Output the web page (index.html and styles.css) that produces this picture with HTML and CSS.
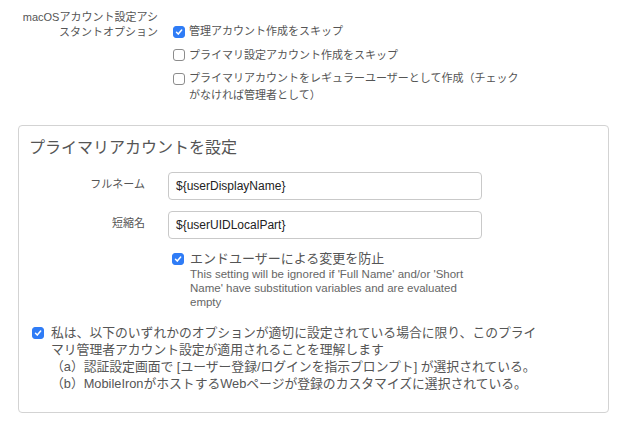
FILE: index.html
```html
<!DOCTYPE html>
<html lang="ja">
<head>
<meta charset="utf-8">
<link rel="stylesheet" href="styles.css">
</head>
<body>
<div class="page">
  <div class="assist">
    <div class="assist-label">macOSアカウント設定アシスタントオプション</div>
    <div class="assist-options">
      <div class="opt"><span class="cb on"><svg viewBox="0 0 12 12"><path d="M3 6.3 L5.1 8.5 L9.2 3.6" /></svg></span><span class="opt-text">管理アカウント作成をスキップ</span></div>
      <div class="opt"><span class="cb"></span><span class="opt-text">プライマリ設定アカウント作成をスキップ</span></div>
      <div class="opt"><span class="cb"></span><span class="opt-text">プライマリアカウントをレギュラーユーザーとして作成（チェックがなければ管理者として）</span></div>
    </div>
  </div>

  <section class="panel">
    <h2 class="panel-title">プライマリアカウントを設定</h2>
    <div class="field">
      <label class="field-label">フルネーム</label>
      <div class="input">${userDisplayName}</div>
    </div>
    <div class="field">
      <label class="field-label">短縮名</label>
      <div class="input">${userUIDLocalPart}</div>
    </div>
    <div class="lock">
      <span class="cb on"><svg viewBox="0 0 12 12"><path d="M3 6.3 L5.1 8.5 L9.2 3.6" /></svg></span>
      <div class="lock-body">
        <div class="lock-text">エンドユーザーによる変更を防止</div>
        <div class="help">This setting will be ignored if 'Full Name' and/or 'Short Name' have substitution variables and are evaluated empty</div>
      </div>
    </div>
    <div class="ack">
      <span class="cb on"><svg viewBox="0 0 12 12"><path d="M3 6.3 L5.1 8.5 L9.2 3.6" /></svg></span>
      <div class="ack-text">私は、以下のいずれかのオプションが適切に設定されている場合に限り、このプライマリ管理者アカウント設定が適用されることを理解します<br>（a）認証設定画面で [ユーザー登録/ログインを指示プロンプト] が選択されている。<br>（b）MobileIronがホストするWebページが登録のカスタマイズに選択されている。</div>
    </div>
  </section>
</div>
</body>
</html>
```

FILE: styles.css
```css
* { box-sizing: border-box; }
html, body { margin: 0; padding: 0; background: #fff; }
body {
  font-family: "Liberation Sans", "Noto Sans CJK JP", sans-serif;
  color: #555;
}
.page {
  width: 628px;
  padding: 0 19px 0 18px;
}
.assist {
  display: flex;
  align-items: flex-start;
}
.assist-label {
  width: 140px;
  flex: none;
  text-align: right;
  font-size: 11px;
  line-height: 15px;
  padding-top: 10px;
  padding-left: 2px;
  color: #555;
}
.assist-options {
  display: flex;
  flex-direction: column;
  gap: 6.5px;
  padding-top: 23px;
  margin-left: 15px;
  width: 350px;
}
.opt {
  display: flex;
  align-items: flex-start;
  gap: 4px;
}
.opt-text {
  font-size: 11px;
  line-height: 17px;
  width: 335px;
}
.cb {
  flex: none;
  width: 12px;
  height: 12px;
  border: 1px solid #8c8c8c;
  border-radius: 3px;
  background: #fff;
  margin-top: 2.5px;
  display: flex;
}
.cb.on {
  background: #2f7cf6;
  border-color: #2f7cf6;
}
.cb svg {
  width: 10px;
  height: 10px;
}
.cb svg path {
  fill: none;
  stroke: #fff;
  stroke-width: 1.8;
  stroke-linecap: round;
  stroke-linejoin: round;
}
.panel {
  margin-top: 21px;
  border: 1px solid #d3d3d3;
  border-radius: 4px;
  padding: 12px 12px 21px 12px;
  height: 288px;
}
.panel-title {
  margin: 0 0 14px -2px;
  font-size: 16px;
  line-height: 20px;
  font-weight: normal;
  color: #555;
}
.field {
  display: flex;
  align-items: center;
  gap: 23px;
  margin-bottom: 11px;
}
.field-label {
  width: 114px;
  text-align: right;
  font-size: 11px;
  line-height: 15px;
  margin-top: -4px;
  color: #555;
}
.input {
  width: 314px;
  height: 28px;
  border: 1px solid #c9c9c9;
  border-radius: 4px;
  padding: 0 7px;
  font-size: 12px;
  line-height: 26px;
  color: #222;
}
.lock {
  display: flex;
  align-items: flex-start;
  gap: 6px;
  margin-left: 141px;
  margin-top: 1px;
}
.lock-body { width: 292px; }
.lock-text {
  font-size: 13px;
  line-height: 17px;
  color: #555;
}
.help {
  font-size: 11.5px;
  line-height: 14px;
  color: #666;
}
.ack {
  display: flex;
  align-items: flex-start;
  gap: 7px;
  margin-top: 15px;
  margin-left: 1px;
}
.ack .cb { margin-top: 2.5px; }
.ack-text {
  width: 494px;
  font-size: 12.8px;
  line-height: 17px;
  color: #555;
}
```
